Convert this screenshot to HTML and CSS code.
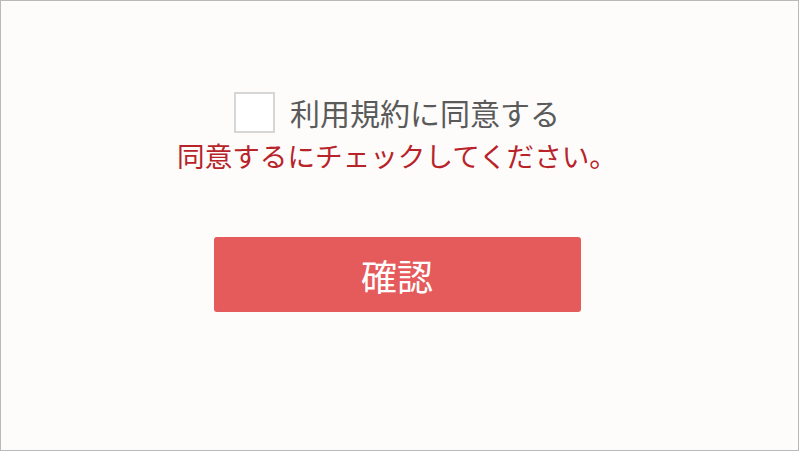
FILE: index.html
```html
<!DOCTYPE html>
<html lang="ja">
<head>
  <meta charset="UTF-8" />
  <meta name="viewport" content="width=device-width, initial-scale=1.0" />
  <title>同意確認</title>
  <link rel="stylesheet" href="styles.css">
</head>
<body>
  <div class="frame">
    <form class="agree-form">
      <label class="agree">
        <input type="checkbox" class="agree-box" />
        <span class="agree-label">利用規約に同意する</span>
      </label>
      <p class="error">同意するにチェックしてください。</p>
      <button type="button" class="submit">確認</button>
    </form>
  </div>
</body>
</html>
```

FILE: styles.css
```css
html, body {
  margin: 0;
  padding: 0;
}

body {
  font-family: "Noto Sans CJK JP", "Noto Sans", sans-serif;
  background-color: #fdfcfa;
}

.frame {
  box-sizing: border-box;
  width: 799px;
  height: 451px;
  border: 1px solid #b9b9b9;
  padding: 91px 5px 0 0;
}

.agree-form {
  display: flex;
  flex-direction: column;
  align-items: center;
}

.agree {
  display: flex;
  align-items: center;
  gap: 15px;
  height: 41px;
}

.agree-box {
  appearance: none;
  box-sizing: border-box;
  width: 41px;
  height: 41px;
  margin: 0;
  background-color: #ffffff;
  border: 2px solid #d6d6d6;
}

.agree-label {
  font-size: 30px;
  line-height: 41px;
  color: #5a5a5a;
}

.error {
  margin: 2px 0 0;
  font-size: 27.6px;
  line-height: 40px;
  color: #b8232a;
}

.submit {
  width: 367px;
  height: 75px;
  margin-top: 62px;
  border: none;
  border-radius: 3px;
  background-color: #e55a5a;
  color: #ffffff;
  font-family: inherit;
  font-size: 36px;
  cursor: pointer;
}
```
